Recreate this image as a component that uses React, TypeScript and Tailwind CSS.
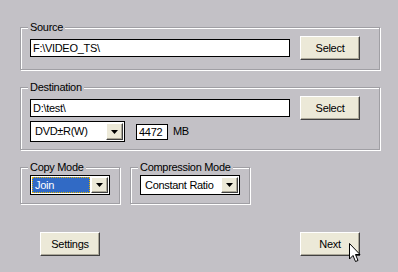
import type { ReactNode } from 'react';

const Arrow = (
  <svg width="7" height="4" viewBox="0 0 7 4">
    <polygon points="0,0 7,0 3.5,4" fill="#000" />
  </svg>
);

function Group({ label, className = '', children }: { label: string; className?: string; children: ReactNode }) {
  return (
    <fieldset
      className={`border border-[#a09fa4] pl-[9px] shadow-[inset_1px_1px_0_#fff,1px_1px_0_#fff] ${className}`}
    >
      <legend className="-ml-[2px] bg-[#c3c1c6] px-[2px] leading-[13px]">{label}</legend>
      {children}
    </fieldset>
  );
}

function Button({ children, className = '' }: { children: ReactNode; className?: string }) {
  return (
    <div
      className={`flex h-[24px] w-[60px] items-center justify-center border border-t-white border-l-white border-r-[#404040] border-b-[#404040] bg-[#ece9d8] shadow-[inset_-1px_-1px_0_#aca899] ${className}`}
    >
      {children}
    </div>
  );
}

function Combo({ text, width, height, focused = false }: { text: string; width: string; height: string; focused?: boolean }) {
  return (
    <div className={`flex ${width} ${height} items-stretch border border-black bg-white p-[1px]`}>
      {focused ? (
        <span className="mr-[1px] flex flex-1 items-center border border-dotted border-[#e0b000] bg-[#316ac5] pl-[2px] text-white">
          {text}
        </span>
      ) : (
        <span className="flex flex-1 items-center pl-[3px]">{text}</span>
      )}
      <span className="flex w-[17px] items-center justify-center border border-t-white border-l-white border-r-[#404040] border-b-[#404040] bg-[#ece9d8] shadow-[inset_-1px_-1px_0_#aca899]">
        {Arrow}
      </span>
    </div>
  );
}

export default function App() {
  return (
    <div className="h-[272px] w-[398px] overflow-hidden bg-[#c3c1c6] pl-[20px] pt-[21px] font-['Liberation_Sans',Arial,sans-serif] text-[11px] leading-[13px] tracking-[-0.3px] text-black">
      <Group label="Source" className="w-[360px] pb-[9px] pt-[2px]">
        <div className="flex items-center gap-[10px]">
          <input
            readOnly
            value="F:\VIDEO_TS\"
            className="h-[18px] w-[260px] border border-black bg-white px-[2px] outline-none"
          />
          <Button>Select</Button>
        </div>
      </Group>

      <Group label="Destination" className="mt-[11px] w-[360px] pb-[7px] pt-[2px]">
        <div className="flex items-center gap-[10px]">
          <input
            readOnly
            value="D:\test\"
            className="h-[18px] w-[260px] border border-black bg-white px-[2px] outline-none"
          />
          <Button>Select</Button>
        </div>
        <div className="mt-[1px] flex items-center">
          <Combo text="DVD±R(W)" width="w-[95px]" height="h-[21px]" />
          <input
            readOnly
            value="4472"
            className="ml-[11px] h-[16px] w-[32px] border border-black bg-white px-[2px] outline-none"
          />
          <span className="ml-[5px]">MB</span>
        </div>
      </Group>

      <div className="mt-[11px] flex gap-[10px]">
        <Group label="Copy Mode" className="w-[100px] pb-[8px] pt-[1px]">
          <Combo text="Join" width="w-[80px]" height="h-[20px]" focused />
        </Group>
        <Group label="Compression Mode" className="w-[120px] pb-[8px] pt-[1px]">
          <Combo text="Constant Ratio" width="w-[100px]" height="h-[20px]" />
        </Group>
      </div>

      <div className="mt-[28px] flex w-[360px] justify-between px-[20px]">
        <Button>Settings</Button>
        <div className="relative">
          <Button>Next</Button>
          <svg className="absolute left-[49px] top-[11px]" width="12" height="20" viewBox="0 0 12 20">
            <path
              d="M0.5 0.5 L0.5 16 L4 12.5 L6.5 18.5 L9 17.5 L6.5 11.5 L11 11.5 Z"
              fill="#fff"
              stroke="#000"
              strokeWidth="1"
              strokeLinejoin="miter"
            />
          </svg>
        </div>
      </div>
    </div>
  );
}
